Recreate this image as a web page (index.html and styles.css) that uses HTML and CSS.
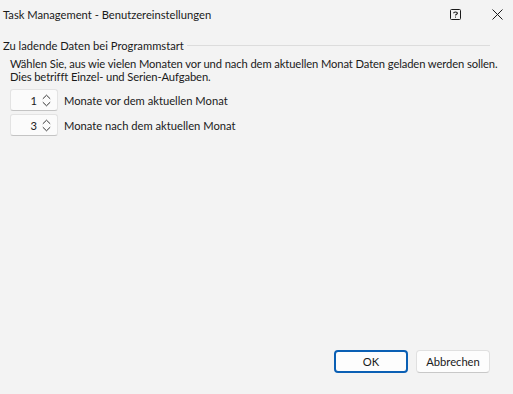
FILE: index.html
```html
<!DOCTYPE html>
<html lang="de">
<head>
  <meta charset="UTF-8">
  <title>Task Management - Benutzereinstellungen</title>
  <link rel="stylesheet" href="styles.css">
</head>
<body>
  <div class="dialog">
    <div class="titlebar">
      <span class="title">Task Management - Benutzereinstellungen</span>
      <span class="help-btn">
        <svg width="11" height="11" viewBox="0 0 11 11">
          <rect x="0.5" y="0.5" width="10" height="10" rx="1" fill="none" stroke="#1a1a1a"/>
          <path d="M3.6 4.2 C3.6 2.6 7.4 2.6 7.4 4.2 C7.4 5.3 5.5 5.3 5.5 6.6" fill="none" stroke="#1a1a1a" stroke-width="1.1"/>
          <rect x="5" y="7.6" width="1" height="1" fill="#1a1a1a"/>
        </svg>
      </span>
      <span class="close-btn">
        <svg width="11" height="11" viewBox="0 0 11 11">
          <path d="M0.5 0.5 L10.5 10.5 M10.5 0.5 L0.5 10.5" stroke="#1a1a1a" stroke-width="1"/>
        </svg>
      </span>
    </div>

    <div class="content">
      <div class="group-head">
        <span>Zu ladende Daten bei Programmstart</span>
        <div class="group-line"></div>
      </div>
      <p class="info">Wählen Sie, aus wie vielen Monaten vor und nach dem aktuellen Monat Daten geladen werden sollen.<br>Dies betrifft Einzel- und Serien-Aufgaben.</p>

      <div class="spin-row">
        <div class="spinbox">
          <span class="spin-value">1</span>
          <svg class="spin-arrows" width="9" height="13" viewBox="0 0 9 13">
            <path d="M0.8 4.8 L4.5 1.2 L8.2 4.8 M0.8 8.2 L4.5 11.8 L8.2 8.2" fill="none" stroke="#333" stroke-width="1"/>
          </svg>
        </div>
        <span class="spin-label">Monate vor dem aktuellen Monat</span>
      </div>
      <div class="spin-row">
        <div class="spinbox">
          <span class="spin-value">3</span>
          <svg class="spin-arrows" width="9" height="13" viewBox="0 0 9 13">
            <path d="M0.8 4.8 L4.5 1.2 L8.2 4.8 M0.8 8.2 L4.5 11.8 L8.2 8.2" fill="none" stroke="#333" stroke-width="1"/>
          </svg>
        </div>
        <span class="spin-label">Monate nach dem aktuellen Monat</span>
      </div>
    </div>

    <div class="buttons">
      <button class="btn btn-default" type="button">OK</button>
      <button class="btn" type="button">Abbrechen</button>
    </div>
  </div>
</body>
</html>
```

FILE: styles.css
```css
html, body {
  margin: 0;
  padding: 0;
  background: #f3f3f3;
}

body {
  font-family: Lato, "Noto Sans", sans-serif;
  font-size: 11.2px;
  color: #1a1a1a;
}

.dialog {
  width: 513px;
  height: 394px;
  display: flex;
  flex-direction: column;
}

/* title bar */
.titlebar {
  height: 28px;
  display: flex;
  align-items: center;
  padding-left: 3px;
}

.title {
  flex: 1;
}

.help-btn {
  width: 11px;
  height: 11px;
  margin-right: 31px;
  display: flex;
}

.close-btn {
  width: 11px;
  height: 11px;
  margin-right: 10px;
  display: flex;
}

/* content */
.content {
  flex: 1;
  padding: 9px 23px 0 3px;
}

.group-head {
  display: flex;
  align-items: center;
  height: 16px;
}

.group-line {
  flex: 1;
  height: 1px;
  background: #dcdcdc;
  margin-left: 3px;
}

.info {
  margin: 4px 0 6px 7px;
  line-height: 13px;
  letter-spacing: -0.1px;
  white-space: nowrap;
}

.spin-row {
  display: flex;
  align-items: center;
  margin-left: 7px;
  margin-bottom: 3px;
}

.spinbox {
  width: 40px;
  height: 20px;
  background: #fbfbfb;
  border: 1px solid #e3e3e3;
  border-bottom-color: #c4c4c4;
  border-radius: 3px;
  display: flex;
  align-items: center;
  justify-content: flex-end;
  padding-right: 6px;
  box-sizing: content-box;
}

.spin-value {
  margin-right: 5px;
}

.spin-arrows {
  display: block;
}

.spin-label {
  margin-left: 6px;
}

/* bottom buttons */
.buttons {
  display: flex;
  justify-content: flex-end;
  gap: 8px;
  padding: 0 23px 21px 0;
}

.btn {
  font-family: inherit;
  font-size: 11.2px;
  color: #1a1a1a;
  width: 74px;
  height: 23px;
  background: #fdfdfd;
  border: 1px solid #e0e0e0;
  border-bottom-color: #c8c8c8;
  border-radius: 4px;
  padding: 0;
}

.btn-default {
  border: 2px solid #0a5fb4;
  background: #fdfdfd;
}
```
